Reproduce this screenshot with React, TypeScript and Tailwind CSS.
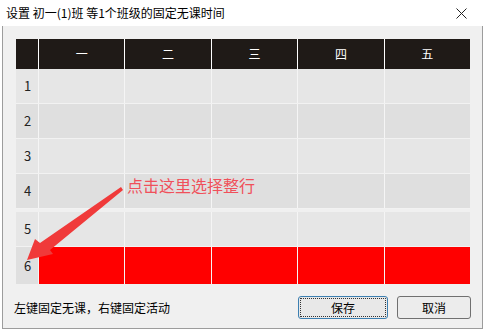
const days = ["一", "二", "三", "四", "五"];

const rows = [
  { n: 1, bg: "bg-[#e6e6e6]" },
  { n: 2, bg: "bg-[#dfdfdf]" },
  { n: 3, bg: "bg-[#e6e6e6]" },
  { n: 4, bg: "bg-[#dfdfdf]" },
  { n: 5, bg: "bg-[#e6e6e6]" },
];

const font = "font-['Microsoft_YaHei','Noto_Sans_CJK_SC',sans-serif]";

function Row({ n, bg, gap }: { n: number; bg: string; gap?: boolean }) {
  return (
    <div className={`flex h-[35px] border-b border-[#f2f2f2] ${gap ? "mt-[3px]" : ""} ${bg}`}>
      <div className="w-[22px] flex items-center pl-[8px] text-[13px] text-[#222]">{n}</div>
      {days.map((d) => (
        <div key={d} className="flex-1 border-l border-[#f5f5f5]" />
      ))}
    </div>
  );
}

function Arrow() {
  return (
    <svg className="absolute left-0 top-0" width="485" height="331">
      <path
        d="M121 187 L123 190 L50 250 L53 254 L27 260 L35 239 L40 243 Z"
        fill="#f03a3a"
      />
    </svg>
  );
}

export default function App() {
  return (
    <div className={`relative w-[485px] h-[331px] bg-white flex flex-col ${font}`}>
      <div className="h-[26px] flex items-center justify-between pl-[6px] pr-[18px] text-[12px] text-black">
        <span>设置 初一(1)班 等1个班级的固定无课时间</span>
        <svg width="11" height="11" viewBox="0 0 11 11">
          <path d="M0.5 0.5 L10.5 10.5 M10.5 0.5 L0.5 10.5" stroke="#222" strokeWidth="1" />
        </svg>
      </div>
      <div className="mx-[2px] mb-[2px] flex-1 bg-[#f0f0f0] border-x border-b border-[#9c9c9c] flex flex-col">
        <div className="ml-[13px] mr-[12px] mt-[13px] flex flex-col">
          <div className="flex h-[30px] bg-[#1f1a17] text-white text-[12px]">
            <div className="w-[22px]" />
            {days.map((d) => (
              <div key={d} className="flex-1 border-l border-white flex items-center justify-center">
                {d}
              </div>
            ))}
          </div>
          {rows.map((r) => (
            <Row key={r.n} n={r.n} bg={r.bg} gap={r.n === 5} />
          ))}
          <div className="flex h-[37px] bg-[#ff0000]">
            <div className="w-[22px] bg-[#dfdfdf] flex items-center pl-[8px] text-[13px] text-[#222]">6</div>
            {days.map((d) => (
              <div key={d} className="flex-1 border-l border-[#f5f5f5]" />
            ))}
          </div>
        </div>
        <div className="flex items-center mt-[12px] ml-[11px] mr-[11px] text-[12px] text-black">
          <span className="flex-1">左键固定无课，右键固定活动</span>
          <button className="w-[90px] h-[23px] rounded-[3px] border border-[#3c7fb1] bg-[#e8e8e8] outline-1 outline-dotted outline-offset-[-3px] outline-[#333] text-[12px]">
            保存
          </button>
          <button className="ml-[9px] w-[74px] h-[23px] rounded-[3px] border border-[#707070] bg-[#ececec] text-[12px]">
            取消
          </button>
        </div>
      </div>
      <div className="absolute left-[127px] top-[173px] text-[16px] text-[#f0505a] leading-[24px]">
        点击这里选择整行
      </div>
      <Arrow />
    </div>
  );
}
